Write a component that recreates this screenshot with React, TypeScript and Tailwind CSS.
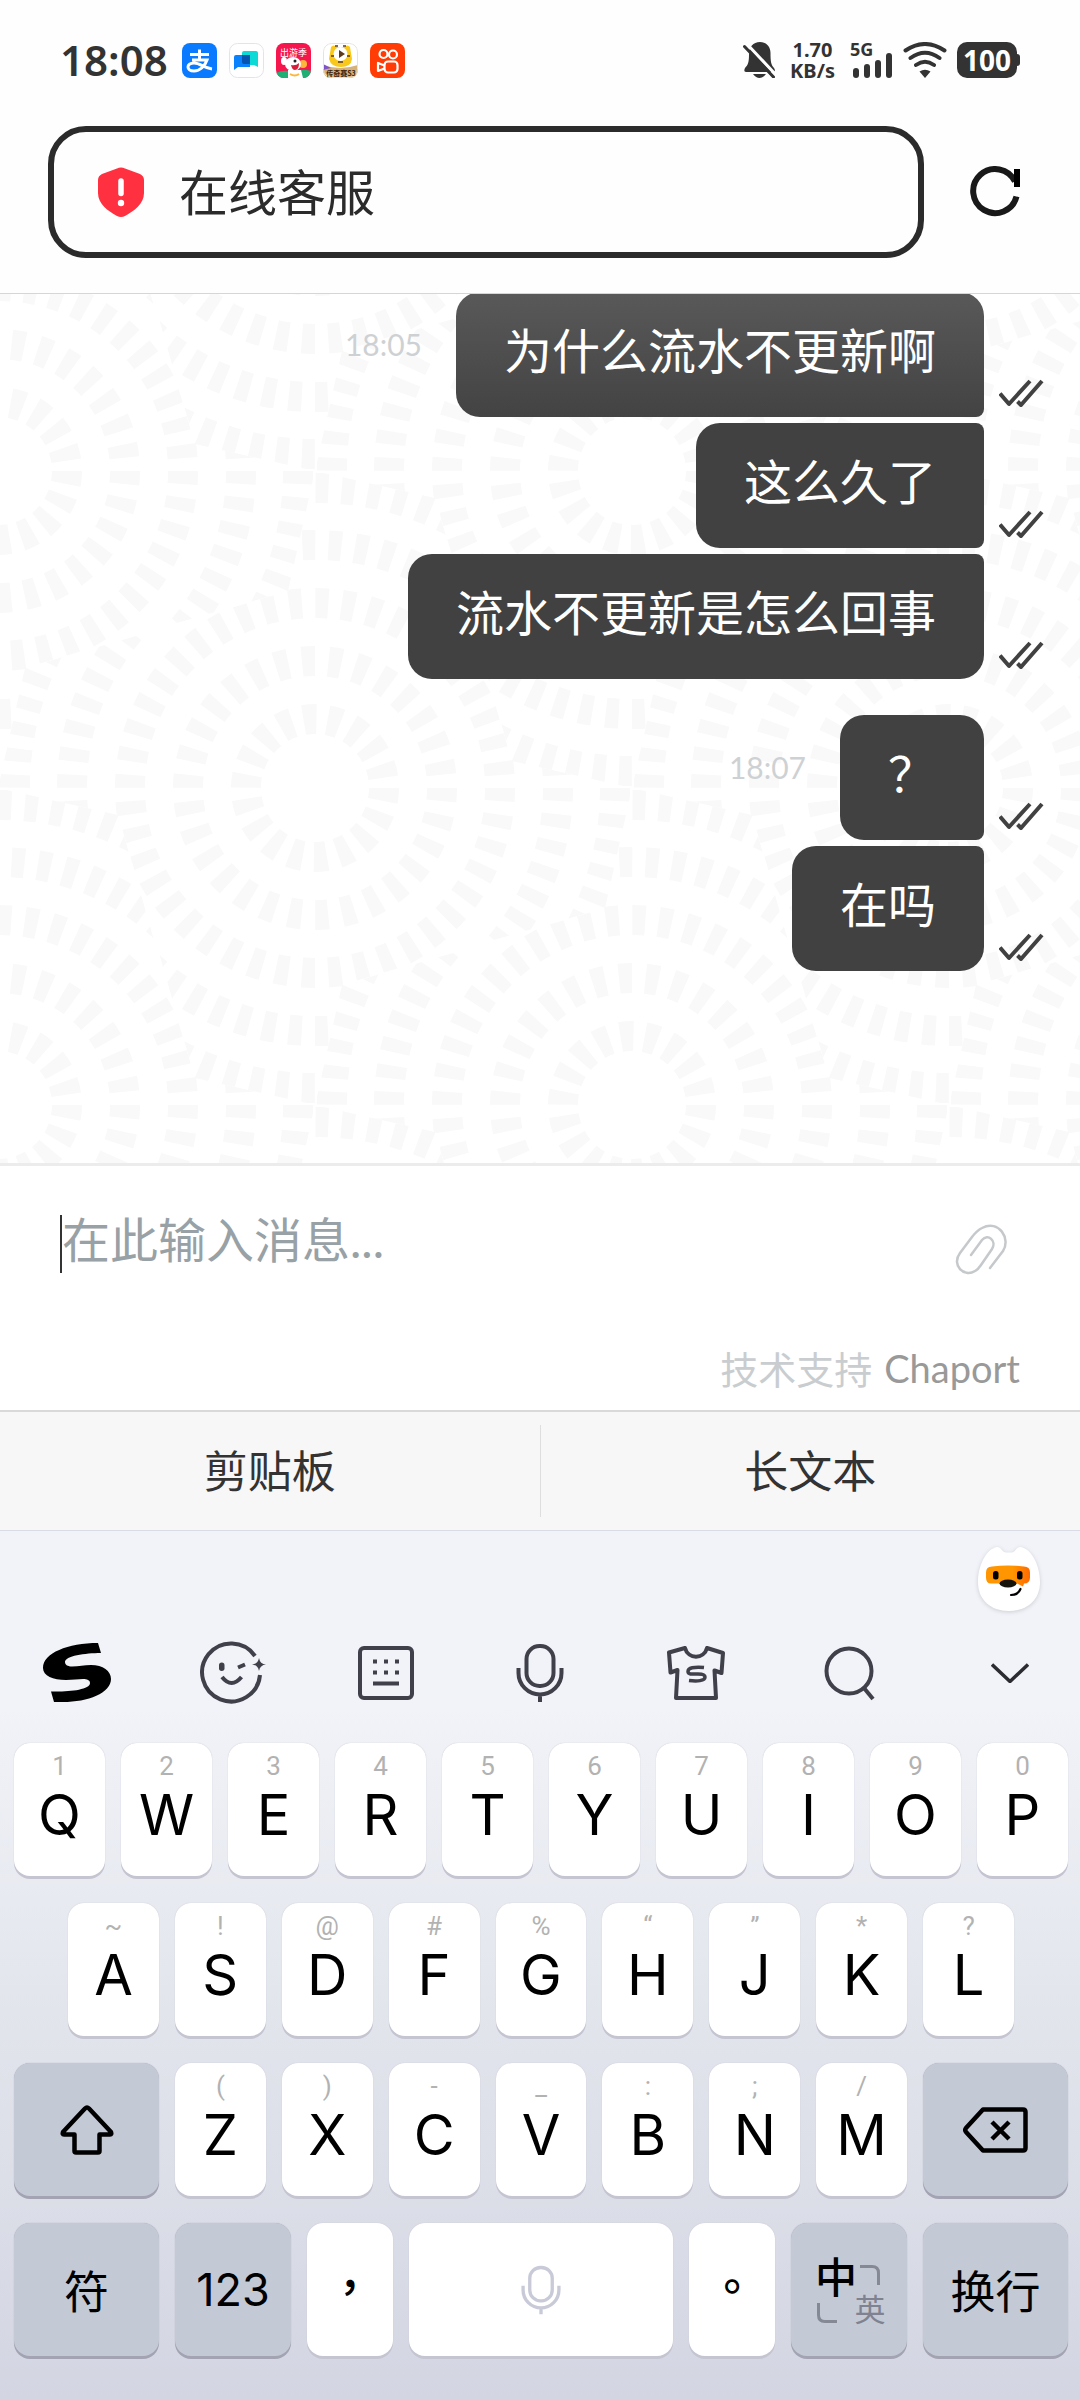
import { ReactNode, useState } from "react";
import clsx from "clsx";

type Corner = "first" | "middle" | "last";

interface Message {
  id: number;
  text: string;
  time?: string;
  corner: Corner;
  faded?: boolean;
}

const messageGroups: Message[][] = [
  [
    { id: 1, text: "为什么流水不更新啊", time: "18:05", corner: "first", faded: true },
    { id: 2, text: "这么久了", corner: "middle" },
    { id: 3, text: "流水不更新是怎么回事", corner: "last" },
  ],
  [
    { id: 4, text: "？", time: "18:07", corner: "first" },
    { id: 5, text: "在吗", corner: "last" },
  ],
];

const topRow = ["Q1", "W2", "E3", "R4", "T5", "Y6", "U7", "I8", "O9", "P0"];
const homeRow = ["A~", "S!", "D@", "F#", "G%", "H“", "J”", "K*", "L?"];
const bottomRow = ["Z(", "X)", "C-", "V_", "B:", "N;", "M/"];

const cornerStyles: Record<Corner, string> = {
  first: "rounded-[24px] rounded-br-[8px]",
  middle: "rounded-[24px] rounded-r-[8px]",
  last: "rounded-[24px] rounded-tr-[8px]",
};

const CJK = "font-['Noto_Sans_CJK_SC',sans-serif]";

function AppBadges() {
  return (
    <div className="flex gap-3">
      <svg className="size-[35px]" viewBox="0 0 35 35">
        <rect width="35" height="35" rx="8" fill="#0a7bff" />
        <g fill="none" stroke="#fff" strokeWidth="3">
          <path d="M8 11.5h19M17.500 6.500v10M10 17h15c-2 6-7 11-13 11-8 0-8-8 0-8 6 0 10 5 18 6" />
        </g>
      </svg>
      <svg className="size-[35px]" viewBox="0 0 35 35">
        <rect x=".5" y=".5" width="34" height="34" rx="8" fill="#fff" stroke="#e2e4ea" />
        <path d="M15 8h12a2 2 0 0 1 2 2v14l-4-2H15a2 2 0 0 1-2-2V10a2 2 0 0 1 2-2z" fill="#0bdad6" />
        <path d="M7 12h14v12H9l-4 3V14a2 2 0 0 1 2-2z" fill="#0a82fb" />
        <path d="M13 12h8v9h-6a2 2 0 0 1-2-2z" fill="#0454b0" />
      </svg>
      <svg className="size-[35px]" viewBox="0 0 35 35">
        <clipPath id="pinkBadge">
          <rect width="35" height="35" rx="8" />
        </clipPath>
        <g clipPath="url(#pinkBadge)">
          <rect width="35" height="35" fill="#f5164e" />
          <path d="M0 30q8-4 16-1 10-4 19-1v7H0z" fill="#1fae74" />
          <circle cx="27" cy="21" r="4" fill="#ffb43c" />
          <path d="M12 27h13l2 8H12z" fill="#fff" />
          <ellipse cx="17" cy="21" rx="8" ry="7" fill="#fff" />
          <ellipse cx="8" cy="18" rx="3" ry="4" fill="#fff" />
          <path d="M15 22q5 1 8-2 0 7-4 7-3 0-4-5z" fill="#d81e3a" />
          <circle cx="19" cy="18" r="1.500" fill="#222" />
          <path d="M14 31q5 3 9 0" stroke="#ffb43c" strokeWidth="2" fill="none" />
        </g>
        <text x="17.500" y="13" textAnchor="middle" fontSize="9" fontWeight="400" fill="#fff" fontFamily="Noto Sans CJK SC, sans-serif">
          出游季
        </text>
      </svg>
      <svg className="size-[35px]" viewBox="0 0 35 35">
        <clipPath id="tigerBadge">
          <rect width="35" height="35" rx="8" />
        </clipPath>
        <g clipPath="url(#tigerBadge)">
          <rect width="35" height="35" fill="#fff" />
          <path d="M0 22q17 6 35 0v13H0z" fill="#d6b178" />
          <path d="M0 21l8 4-8 2z" fill="#8054c8" />
          <path d="M8 4q3-3 5 0h9q2-3 5 0l2 12q-1 8-11 8T6 16z" fill="#f9c81d" />
          <circle cx="17.500" cy="11" r="7" fill="#fff" />
          <path d="M16 7l6 4-6 4z" fill="#5b3a1b" />
          <path d="M12 3h3M20 3h3M15 19h5M8 13h3M24 13h3" stroke="#5b3a1b" strokeWidth="1.500" />
          <rect x=".5" y=".5" width="34" height="34" rx="8" fill="none" stroke="#e6e2dc" />
        </g>
        <text x="18" y="33" textAnchor="middle" fontSize="7" fontWeight="700" fill="#3a2410" fontFamily="Noto Sans CJK SC, sans-serif">
          传奇赛S3
        </text>
      </svg>
      <svg className="size-[35px]" viewBox="0 0 35 35">
        <rect width="35" height="35" rx="8" fill="#ff3c05" />
        <g fill="none" stroke="#fff" strokeWidth="2.200" strokeLinejoin="round">
          <circle cx="13.500" cy="11" r="4" />
          <circle cx="23" cy="11.500" r="4" />
          <rect x="14.500" y="18.500" width="13" height="11" rx="3.500" />
          <path d="M14.500 22.500L8 20v8l6.500-2.500" />
        </g>
      </svg>
    </div>
  );
}

function StatusBar() {
  return (
    <div className="flex h-[126px] items-center justify-between px-[60px] pb-1.5 font-['Noto_Sans',sans-serif] text-[#333]">
      <div className="flex items-center gap-3.5">
        <span className="text-[42px] leading-9 font-semibold">18:08</span>
        <AppBadges />
      </div>
      <div className="flex items-center">
        <svg className="h-9 w-[33px]" viewBox="0 0 33 36">
          <path d="M17 0c7 0 10.500 5 10.500 11 0 8 .5 12 3.500 15 1.500 2 1 4-1 4H3c-2 0-2-2-1-4 3-3 4-6 4-13C6 5 10 0 17 0z" fill="#333" />
          <path d="M10 32h13q-3 4-6.500 4T10 32z" fill="#333" />
          <path d="M3.500 1.500L33 33" stroke="#fff" strokeWidth="3" />
          <path d="M1.500 4.500L30.500 35" stroke="#333" strokeWidth="3" strokeLinecap="round" />
        </svg>
        <div className="ml-3.5 text-center text-[20px] leading-[21px] font-bold">
          <div>1.70</div>
          <div>KB/s</div>
        </div>
        <svg className="ml-4 h-9 w-[42px] overflow-visible" viewBox="0 0 42 36" fill="#333">
          <text x="-1" y="14" fontSize="18" fontWeight="700">
            5G
          </text>
          <rect x="2" y="26" width="6" height="10" rx="3" />
          <rect x="13" y="22" width="6" height="14" rx="3" />
          <rect x="24" y="18" width="6" height="18" rx="3" />
          <rect x="35" y="11" width="6" height="25" rx="3" />
        </svg>
        <svg className="ml-2.5 h-9 w-11" viewBox="0 0 44 36" fill="none" stroke="#333" strokeWidth="4" strokeLinecap="round">
          <path d="M2.500 8.500Q22-4.500 41.500 8.500M7.500 16Q22 5.500 36.500 16M13 23Q22 16.500 31 23" />
          <path d="M16.500 29.500Q22 26 27.500 29.500L22 36z" fill="#333" stroke="none" />
        </svg>
        <div className="ml-2.5 flex items-center">
          <div className="flex h-9 w-[60px] items-center justify-center rounded-[10px] bg-[#333] text-[28px] leading-9 font-bold text-white">
            100
          </div>
          <div className="h-3 w-[3px] rounded-r-sm bg-[#333]" />
        </div>
      </div>
    </div>
  );
}

function AddressBar() {
  return (
    <div className="flex items-center gap-[46px] border-b border-[#d6d6d6] pr-[58px] pb-[35px] pl-12">
      <label className="flex h-[132px] flex-1 items-center rounded-[38px] border-6 border-[#2b2b2b] pl-11">
        <svg className="h-[50px] w-[46px] shrink-0" viewBox="0 0 46 50">
          <path d="M19 1.500q4-2 8 0L42 7q4 2 4 6v13c0 11-10 18-19 23q-4 2-8 0C10 44 0 37 0 26V13q0-4 4-6z" fill="#ff3040" />
          <path d="M23 14v12.500" stroke="#fff" strokeWidth="5.500" strokeLinecap="round" />
          <circle cx="23" cy="36" r="3.200" fill="#fff" />
        </svg>
        <input
          className={clsx(CJK, "ml-[35px] h-[72px] min-w-0 flex-1 bg-transparent pb-1 text-[49px] text-[#2b2b2b] outline-none")}
          aria-label="地址"
          defaultValue="在线客服"
        />
      </label>
      <button aria-label="刷新">
        <svg className="size-[52px]" viewBox="0 0 52 52">
          <path d="M46.500 30.500A22 22 0 1 1 45 15.500" fill="none" stroke="#191919" strokeWidth="6" />
          <path d="M44 3h6v18h-6z" fill="#000" />
        </svg>
      </button>
    </div>
  );
}

const rings = [
  { r: 69, count: 18 },
  { r: 127, count: 30 },
  { r: 185, count: 44 },
  { r: 243, count: 58 },
  { r: 300, count: 72 },
];

const burstCenters = [
  [0, 0],
  [634, 0],
  [0, 634],
  [634, 634],
  [317, 317],
];

// Bursts of radial dashes, each one trimmed to a pinwheel so that they tile
function ChatPattern() {
  return (
    <svg className="absolute inset-0 size-full">
      <defs>
        <clipPath id="pinwheel">
          <path d="M0-317L120-290 158-158 197-27 317 0 290 120 158 158 27 197 0 317-120 290-158 158-197 27-317 0-290-120-158-158-27-197z" />
        </clipPath>
        <g id="burst" clipPath="url(#pinwheel)" fill="none" stroke="#f9f9f9" strokeWidth="30">
          {rings.map(({ r, count }) => {
            const step = (2 * Math.PI * r) / count;
            return <circle key={r} r={r} strokeDasharray={`13 ${step - 13}`} />;
          })}
        </g>
        <pattern id="bursts" width="634" height="634" patternUnits="userSpaceOnUse" patternTransform="translate(-2 177)">
          {burstCenters.map(([x, y]) => (
            <use key={`${x}-${y}`} href="#burst" x={x} y={y} />
          ))}
        </pattern>
      </defs>
      <rect width="100%" height="100%" fill="url(#bursts)" />
    </svg>
  );
}

function Bubble({ text, time, corner, faded }: Message) {
  return (
    <li className="flex items-start justify-end">
      {time && (
        <time className="mt-[37px] mr-[34px] font-['Lato',sans-serif] text-[30px] leading-[30px] text-[#ced1d3]">{time}</time>
      )}
      <p
        className={clsx(
          CJK,
          "px-12 pt-[18px] pb-[30px] text-[48px] leading-[77px] text-white",
          cornerStyles[corner],
          faded ? "bg-linear-to-b from-[#595959] to-[#434343]" : "bg-[#414141]"
        )}
      >
        {text}
      </p>
      <svg className="mb-2.5 ml-[15px] h-7 w-[45px] self-end" viewBox="0 0 45 28" fill="none" stroke="#414141" strokeWidth="4">
        <path d="M1 14.500L10 25 31 2M18.500 22.500L22 26 43 2" strokeLinejoin="round" />
      </svg>
    </li>
  );
}

function Composer() {
  const [draft, setDraft] = useState("");

  return (
    <div className="border-t-3 border-[#ebedec] bg-white px-[60px] pt-[46px] pb-5">
      <div className="flex h-16 items-center">
        {!draft && <span className="h-[58px] w-[2px] bg-[#333]" />}
        <input
          className="h-16 min-w-0 flex-1 pb-2 font-['Lato','Noto_Sans_CJK_SC',sans-serif] text-[48px] text-[#333] outline-none placeholder:text-[#98a1a5]"
          aria-label="消息"
          placeholder="在此输入消息..."
          value={draft}
          onChange={(e) => setDraft(e.target.value)}
        />
        <button className="mr-3 self-end" aria-label="附件">
          <svg className="h-[54px] w-[53px]" viewBox="0 0 53 54" fill="none" stroke="#c6c9cb" strokeWidth="2.500" strokeLinecap="round">
            <path d="M35 46L48 29C56 17 44-3 27 6 23 8 20 11 17 15L5 31C-4 43 9 56 20 49 22 48 24 46 26 43L37 27C42 19 33 11 27 18L16 33" />
          </svg>
        </button>
      </div>
      <div className="mt-[72px] mb-0.5 flex h-10 items-center justify-end gap-3 text-[38px] leading-10">
        <span className={clsx(CJK, "text-[#c9cdd0]")}>技术支持</span>
        <a className="font-['Lato',sans-serif] text-[#999]" href="#chaport">
          Chaport
        </a>
      </div>
    </div>
  );
}

function MicIcon({ className }: { className: string }) {
  return (
    <svg className={className} viewBox="0 0 48 60" fill="none" stroke="currentColor" strokeWidth="4">
      <rect x="10.500" y="3" width="27" height="40" rx="13" />
      <path d="M2.500 25v5a21.500 21.500 0 0 0 43 0v-5M24 51v8" />
    </svg>
  );
}

function Toolbar() {
  return (
    <div className="grid h-[122px] grid-cols-7 place-items-center text-[#3f404a]">
      <button className="text-black" aria-label="搜狗">
        <svg className="h-[60px] w-[68px]" viewBox="0 0 68 60">
          <path d="M55 0L58 10C42 10 22 13 22 19 22 22 25 23.500 29 23.500 36 23.500 41 22 48 22 60 22 68 28 68 36 68 50 45 59 20 59L11 59 8 48.500C25 49 47 47 47 40 47 37 44 36 40 36 35 36 30 37 23 37 10 37 0 33 0 25 0 10 25 0 55 0z" />
        </svg>
      </button>
      <button className="pl-1" aria-label="表情">
        <svg className="h-16 w-[66px]" viewBox="0 0 66 64" fill="none" stroke="currentColor" strokeWidth="4">
          <path d="M55 15A29 29 0 1 0 60 34" />
          <rect x="19" y="21.500" width="5.500" height="8.500" rx="2.700" fill="currentColor" stroke="none" />
          <path d="M38 26.500l7-3M22 36q9.500 12 19.500 0" />
          <path d="M59 17q1 6 7 6.500-6 .5-7 6.500-1-6-7-6.500 6-.5 7-6.500z" fill="currentColor" stroke="none" />
        </svg>
      </button>
      <button aria-label="键盘">
        <svg className="h-[54px] w-14" viewBox="0 0 56 54" fill="none" stroke="currentColor" strokeWidth="4">
          <rect x="2" y="2" width="52" height="50" rx="4" />
          <path d="M15 15.500h4m7 0h4m7 0h4M15 26.500h4m7 0h4m7 0h4M15 37.500h26" />
        </svg>
      </button>
      <button aria-label="语音">
        <MicIcon className="h-[60px] w-12" />
      </button>
      <button className="pl-1" aria-label="皮肤">
        <svg className="h-[54px] w-[58px]" viewBox="0 0 58 54" fill="none" stroke="currentColor" strokeWidth="4" strokeLinejoin="round">
          <path d="M2 6.500L18 2C21 13.500 37 13.500 40 2L56 7 54.500 27 47.500 24.500 49 52H9L10.500 24 3.500 26.500z" />
          <path d="M37 21.500C27 20.500 21 22 21 25.500 21 29 27 28 31 28 35 28 38 28.500 38 31 38 35 30 35.500 22 34.500" strokeWidth="3.500" />
        </svg>
      </button>
      <button aria-label="搜索">
        <svg className="h-[56px] w-[52px]" viewBox="0 0 52 56" fill="none" stroke="currentColor" strokeWidth="4">
          <circle cx="26" cy="26" r="22.500" />
          <path d="M41 43l9 11" />
        </svg>
      </button>
      <button className="pl-3.5" aria-label="收起">
        <svg className="h-5 w-[38px]" viewBox="0 0 38 20" fill="none" stroke="#2b2b31" strokeWidth="3.500">
          <path d="M1 1.500L19 18.500 37 1.500" />
        </svg>
      </button>
    </div>
  );
}

function LetterKey({ value }: { value: string }) {
  return (
    <button className="flex h-[133px] min-w-0 flex-1 flex-col items-center justify-start rounded-2xl bg-white pt-[9px] font-['Inter',sans-serif] shadow-[0_3px_0_#c5c5d2,0_0_1px_#b8b8c4]">
      <span className="font-['Roboto',sans-serif] text-[26px] leading-7 text-[#b2b2b2]">{value[1]}</span>
      <span className="mt-[7px] text-[56px] leading-14 text-black">{value[0]}</span>
    </button>
  );
}

interface ActionKeyProps {
  className: string;
  label?: string;
  light?: boolean;
  children?: ReactNode;
}

function ActionKey({ className, label, light, children }: ActionKeyProps) {
  return (
    <button
      aria-label={label}
      className={clsx(
        "flex h-[133px] items-center justify-center rounded-2xl text-[45px] leading-[60px] text-black",
        light
          ? "bg-white shadow-[0_3px_0_#c5c5d2,0_0_1px_#b8b8c4]"
          : "bg-[#c4c9d6] shadow-[0_3px_0_#a3a3b3,0_0_1px_#9a9fae]",
        className
      )}
    >
      {children}
    </button>
  );
}

function Keyboard() {
  return (
    <div className="bg-linear-to-b from-[#f1f3f8] from-20% via-[#e2e4ec] via-58% to-[#d3d6e2]">
      <div className="flex justify-end pt-[15px] pr-[39px]">
        <button aria-label="汪仔">
          <svg className="h-[66px] w-16 drop-shadow-sm" viewBox="0 0 64 66">
            <linearGradient id="mask">
              <stop offset="0.600" stopColor="#ff9500" />
              <stop offset="1" stopColor="#ff6a00" />
            </linearGradient>
            <path d="M20 1C24 1 25 6 28.500 6.500H35C39 6 39 1 43.500 1 55 3 63 20 63 36 63 54 50 65 32 65S1 54 1 36C1 20 9 3 20 1z" fill="#fff" />
            <path d="M15 20.500q16-2 32 0 6 0 6 6v5q0 6-6 6l-1 3-6-3H14q-5 0-5-6v-5q0-6 6-6z" fill="url(#mask)" />
            <rect x="16" y="25" width="5.500" height="8.500" rx="2.500" />
            <rect x="40" y="25" width="5.500" height="8.500" rx="2.500" />
            <ellipse cx="31" cy="37.500" rx="8.500" ry="4" fill="#15130a" />
            <path d="M34 49q7 0 9.500-6" fill="none" stroke="#000" strokeWidth="2.200" strokeLinecap="round" />
          </svg>
        </button>
      </div>
      <Toolbar />
      <div className="flex flex-col gap-[27px] pt-[9px] pr-3 pb-11 pl-3.5">
        <div className="flex gap-4">
          {topRow.map((value) => (
            <LetterKey key={value} value={value} />
          ))}
        </div>
        <div className="flex gap-4 px-[54px]">
          {homeRow.map((value) => (
            <LetterKey key={value} value={value} />
          ))}
        </div>
        <div className="flex gap-4">
          <ActionKey className="w-[145px]" label="大写">
            <svg className="h-[50px] w-[54px]" viewBox="0 0 54 50" fill="none" stroke="#000" strokeWidth="4.500" strokeLinejoin="round">
              <path d="M27 2.500q1 0 2 1L51 27q1 2.500-1 2.500H39.500V46q0 1.500-1.500 1.500H16q-1.500 0-1.500-1.500V29.500H4q-2 0-1-2.500L25 3.500q1-1 2-1z" />
            </svg>
          </ActionKey>
          {bottomRow.map((value) => (
            <LetterKey key={value} value={value} />
          ))}
          <ActionKey className="w-[145px]" label="删除">
            <svg className="h-[46px] w-[65px]" viewBox="0 0 65 46" fill="none" stroke="#000" strokeWidth="4.500" strokeLinejoin="round">
              <path d="M20 2.500h40q2.500 0 2.500 2.500v36q0 2.500-2.500 2.500H20L3 25q-1.500-2 0-4zM29 15l17 17M46 15L29 32" />
            </svg>
          </ActionKey>
        </div>
        <div className="flex gap-4">
          <ActionKey className={clsx(CJK, "w-[145px]")}>符</ActionKey>
          <ActionKey className="w-[116px] font-['Inter',sans-serif]">123</ActionKey>
          <ActionKey className="w-[86px] pb-2.5 font-['Noto_Sans_CJK_TC',sans-serif] font-medium" light>
            ，
          </ActionKey>
          <ActionKey className="flex-1" label="空格" light>
            <MicIcon className="h-[50px] w-10 text-[#c8cad8]" />
          </ActionKey>
          <ActionKey className="w-[86px] pb-2.5 font-['Noto_Sans_CJK_TC',sans-serif] font-medium" light>
            。
          </ActionKey>
          <ActionKey className={clsx(CJK, "w-[116px] pl-1")}>
            <span className="grid grid-cols-[38px_30px] grid-rows-[36px_30px] items-center justify-items-center">
              <span className="text-[42px] leading-9 font-medium">中</span>
              <svg className="size-5" viewBox="0 0 20 20" fill="none" stroke="#858895" strokeWidth="3">
                <path d="M0 1.500h12q6.500 0 6.500 6.500v12" />
              </svg>
              <svg className="size-5 self-end justify-self-start" viewBox="0 0 20 20" fill="none" stroke="#858895" strokeWidth="3">
                <path d="M1.500 0v12q0 6.500 6.500 6.500h12" />
              </svg>
              <span className="text-[31px] leading-[26px] text-[#7f8290]">英</span>
            </span>
          </ActionKey>
          <ActionKey className={clsx(CJK, "w-[145px]")}>换行</ActionKey>
        </div>
      </div>
    </div>
  );
}

export default function App() {
  return (
    <div className="flex min-h-screen flex-col bg-[#fefefe]">
      <StatusBar />
      <AddressBar />
      <main className="relative flex-1 overflow-hidden bg-white">
        <ChatPattern />
        <div className="relative -mt-0.5 flex flex-col gap-9 pr-9">
          {messageGroups.map((group) => (
            <ul key={group[0].id} className="flex flex-col gap-1.5">
              {group.map((message) => (
                <Bubble key={message.id} {...message} />
              ))}
            </ul>
          ))}
        </div>
      </main>
      <Composer />
      <div className={clsx(CJK, "flex h-[121px] border-t-2 border-b border-t-[#d9d9d9] border-b-[#dadce5] bg-[#f7f7f7] text-[44px] text-[#333]")}>
        <button className="flex-1 pb-1">剪贴板</button>
        <div className="my-[13px] w-px bg-[#dedede]" />
        <button className="flex-1 pb-1">长文本</button>
      </div>
      <Keyboard />
    </div>
  );
}
